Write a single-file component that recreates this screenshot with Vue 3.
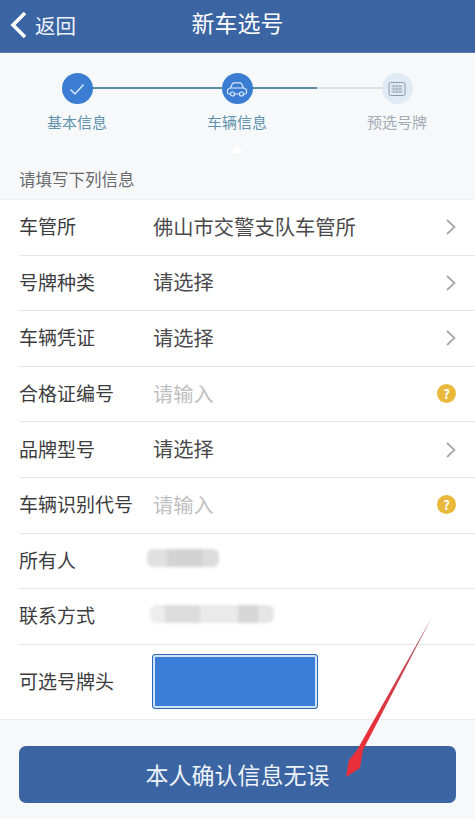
<script setup>
const steps = [
  { key: "base", label: "基本信息", state: "done" },
  { key: "car", label: "车辆信息", state: "done" },
  { key: "plate", label: "预选号牌", state: "todo" },
];

const rows = [
  { label: "车管所", value: "佛山市交警支队车管所", type: "select" },
  { label: "号牌种类", value: "请选择", type: "select" },
  { label: "车辆凭证", value: "请选择", type: "select" },
  { label: "合格证编号", value: "请输入", type: "input" },
  { label: "品牌型号", value: "请选择", type: "select" },
  { label: "车辆识别代号", value: "请输入", type: "input" },
];

// redacted values, drawn as blocks of grey
const nameBlocks = [
  { w: 20, c: "#e0e0e0" },
  { w: 36, c: "#d3d3d3" },
  { w: 16, c: "#dcdcdc" },
];
const phoneBlocks = [
  { w: 15, c: "#ededed" },
  { w: 35, c: "#dcdcdc" },
  { w: 38, c: "#eaeaea" },
  { w: 20, c: "#d6d6d6" },
  { w: 16, c: "#e6e6e6" },
];
</script>

<template>
  <div class="page">
    <header class="topbar">
      <div class="back">
        <svg class="back-icon" width="18" height="28" viewBox="0 0 18 28">
          <path d="M16 2 L4 14 L16 26" fill="none" stroke="#fff" stroke-width="3.6" />
        </svg>
        <span>返回</span>
      </div>
      <div class="title">新车选号</div>
    </header>

    <div class="steps">
      <div class="track">
        <span class="track-on"></span>
        <span class="track-off"></span>
      </div>
      <div v-for="s in steps" :key="s.key" class="step" :class="s.state">
        <div class="dot">
          <svg v-if="s.key === 'base'" width="20" height="20" viewBox="0 0 20 20">
            <path d="M3.5 10.5 L8 15 L16.5 5.5" fill="none" stroke="#dbe9fa" stroke-width="1.5" />
          </svg>
          <svg v-else-if="s.key === 'car'" width="22" height="18" viewBox="0 0 22 18">
            <path
              d="M4.5 14 H3 Q1.5 14 1.5 12.5 V10.5 Q1.5 9 3 8.5 L4.5 8 L6.4 3.8 Q6.9 2.8 8 2.8 H14 Q15.1 2.8 15.6 3.8 L17.5 8 L19 8.5 Q20.5 9 20.5 10.5 V12.5 Q20.5 14 19 14 H17.5 M8.5 14 H13.5 M4.5 8 H17.5"
              fill="none"
              stroke="#dbe9fa"
              stroke-width="1.2"
            />
            <circle cx="6.5" cy="14" r="2" fill="none" stroke="#dbe9fa" stroke-width="1.2" />
            <circle cx="15.5" cy="14" r="2" fill="none" stroke="#dbe9fa" stroke-width="1.2" />
          </svg>
          <svg v-else width="18" height="16" viewBox="0 0 18 16">
            <rect x="1" y="1.5" width="16" height="13" rx="1.5" fill="none" stroke="#8d9aa8" stroke-width="1" />
            <path d="M3.5 5 H14.5 M3.5 8 H14.5 M3.5 11 H14.5 M6 4 V12 M9 4 V12 M12 4 V12" stroke="#9aa7b5" stroke-width="0.9" />
          </svg>
        </div>
        <div class="step-label">{{ s.label }}</div>
      </div>
    </div>

    <div class="section-title">
      <span class="caret"></span>
      请填写下列信息
    </div>

    <div class="form">
      <div v-for="r in rows" :key="r.label" class="row">
        <span class="row-label">{{ r.label }}</span>
        <span class="row-value" :class="{ placeholder: r.type === 'input' }">{{ r.value }}</span>
        <svg v-if="r.type === 'select'" class="chevron" width="12" height="18" viewBox="0 0 12 18">
          <path d="M2 2 L9.5 9 L2 16" fill="none" stroke="#a9a9ab" stroke-width="1.8" />
        </svg>
        <span v-else class="help">?</span>
      </div>
      <div class="row">
        <span class="row-label">所有人</span>
        <span class="smudge smudge-name">
          <i v-for="(b, i) in nameBlocks" :key="i" :style="{ width: b.w + 'px', background: b.c }"></i>
        </span>
      </div>
      <div class="row">
        <span class="row-label">联系方式</span>
        <span class="smudge smudge-phone">
          <i v-for="(b, i) in phoneBlocks" :key="i" :style="{ width: b.w + 'px', background: b.c }"></i>
        </span>
      </div>
      <div class="row row-plate">
        <span class="row-label">可选号牌头</span>
        <span class="plate"></span>
      </div>
    </div>

    <div class="footer">
      <button type="button" class="confirm">本人确认信息无误</button>
    </div>

    <svg class="arrow" width="100" height="170" viewBox="0 0 100 170">
      <defs>
        <linearGradient id="arrow-fade" x1="0" y1="0" x2="0" y2="1">
          <stop offset="0" stop-color="#a8757c" />
          <stop offset="0.35" stop-color="#c8434c" />
          <stop offset="0.7" stop-color="#e8303a" />
        </linearGradient>
      </defs>
      <path d="M92 5 L23 138 L20 156 L6 165 L9 148 L17 138 Z" fill="url(#arrow-fade)" />
    </svg>
  </div>
</template>

<style scoped>
.page {
  position: relative;
  width: 475px;
  height: 819px;
  overflow: hidden;
  background: #f6f8fa;
  color: #3a3a3c;
  font-family: "Noto Sans CJK SC", "Liberation Sans", sans-serif;
}

.topbar {
  position: relative;
  height: 52px;
  display: flex;
  align-items: center;
  justify-content: center;
  background: #3b64a3;
  border-bottom: 1px solid #5b7cae;
  color: #fff;
}

.back {
  position: absolute;
  left: 9px;
  top: 10px;
  display: flex;
  align-items: center;
  gap: 8px;
  font-size: 20.5px;
  line-height: 30px;
  color: #eef3f9;
}

.title {
  margin-bottom: 8px;
  font-size: 23px;
  line-height: 44px;
}

.steps {
  position: relative;
  box-sizing: border-box;
  height: 80px;
  margin-left: -3px;
  display: grid;
  grid-template-columns: 160px 160px 160px;
  padding-top: 20px;
}

.track {
  position: absolute;
  top: 34px;
  left: 80px;
  width: 320px;
  display: flex;
  height: 2px;
}

.track-on {
  width: 240px;
  background: #5d8ca5;
}

.track-off {
  flex: 1;
  background: #d8e3ea;
}

.step {
  position: relative;
  display: flex;
  flex-direction: column;
  align-items: center;
}

.dot {
  width: 31px;
  height: 31px;
  display: grid;
  place-items: center;
  border-radius: 50%;
  background: #3a7dd3;
}

.step.todo .dot {
  background: #e0ebf5;
}

.step-label {
  margin-top: 6px;
  font-size: 15px;
  line-height: 24px;
  color: #5f93ad;
}

.step.todo .step-label {
  color: #a3acb3;
}

.section-title {
  position: relative;
  box-sizing: border-box;
  height: 66px;
  padding: 0 0 8px 19px;
  display: flex;
  align-items: flex-end;
  font-size: 16.5px;
  line-height: 24px;
  color: #6a6a6c;
}

.caret {
  position: absolute;
  left: 230px;
  top: 13px;
  width: 0;
  height: 0;
  border-left: 7px solid transparent;
  border-right: 7px solid transparent;
  border-bottom: 7px solid #fff;
}

.form {
  background: #fff;
  border-top: 1px solid #eef0f2;
}

.row {
  height: 55.6px;
  box-sizing: border-box;
  margin-left: 19px;
  padding-right: 20px;
  padding-bottom: 3px;
  display: flex;
  align-items: center;
  border-bottom: 1px solid #e4e6e8;
  font-size: 19px;
}

.row-label {
  width: 134px;
  flex: none;
  white-space: nowrap;
  color: #3c3c3e;
}

.row-value {
  flex: 1;
  font-size: 20.3px;
  color: #4a4a4c;
}

.row-value.placeholder {
  color: #c0c0c2;
}

.chevron {
  margin-right: -2px;
  margin-top: 3px;
}

.help {
  width: 19px;
  height: 19px;
  margin-right: -1px;
  margin-top: 2px;
  display: grid;
  place-items: center;
  border-radius: 50%;
  background: #eab93c;
  color: #fff;
  font-size: 13px;
  font-weight: 700;
  line-height: 1;
}

.smudge {
  display: flex;
  height: 18px;
  margin-top: -2px;
  filter: blur(1.5px);
  border-radius: 6px;
  overflow: hidden;
}

.smudge i {
  display: block;
  height: 100%;
}

.smudge-name {
  margin-left: -6px;
}

.smudge-phone {
  margin-left: -3px;
}

.row-plate {
  height: 75px;
  margin-left: 0;
  padding-left: 19px;
  padding-bottom: 0;
  border-bottom-color: #e9ebed;
}

.row-plate .row-label {
  padding-bottom: 3px;
}

.plate {
  width: 166px;
  height: 55px;
  box-sizing: border-box;
  margin-left: -1px;
  background: #3a7dd8;
  border: 1px solid #2f69b5;
  box-shadow: inset 0 0 0 2px #cfe2f6;
  border-radius: 3px;
}

.footer {
  padding: 26px 19px 0;
}

.confirm {
  display: block;
  width: 100%;
  height: 57px;
  border: none;
  border-radius: 7px;
  background: #3b64a3;
  color: #eef3f9;
  font-family: inherit;
  font-size: 23px;
}

.arrow {
  position: absolute;
  left: 340px;
  top: 612px;
  pointer-events: none;
}
</style>
<style>
html,
body {
  margin: 0;
  background: #f6f8fa;
}
</style>
